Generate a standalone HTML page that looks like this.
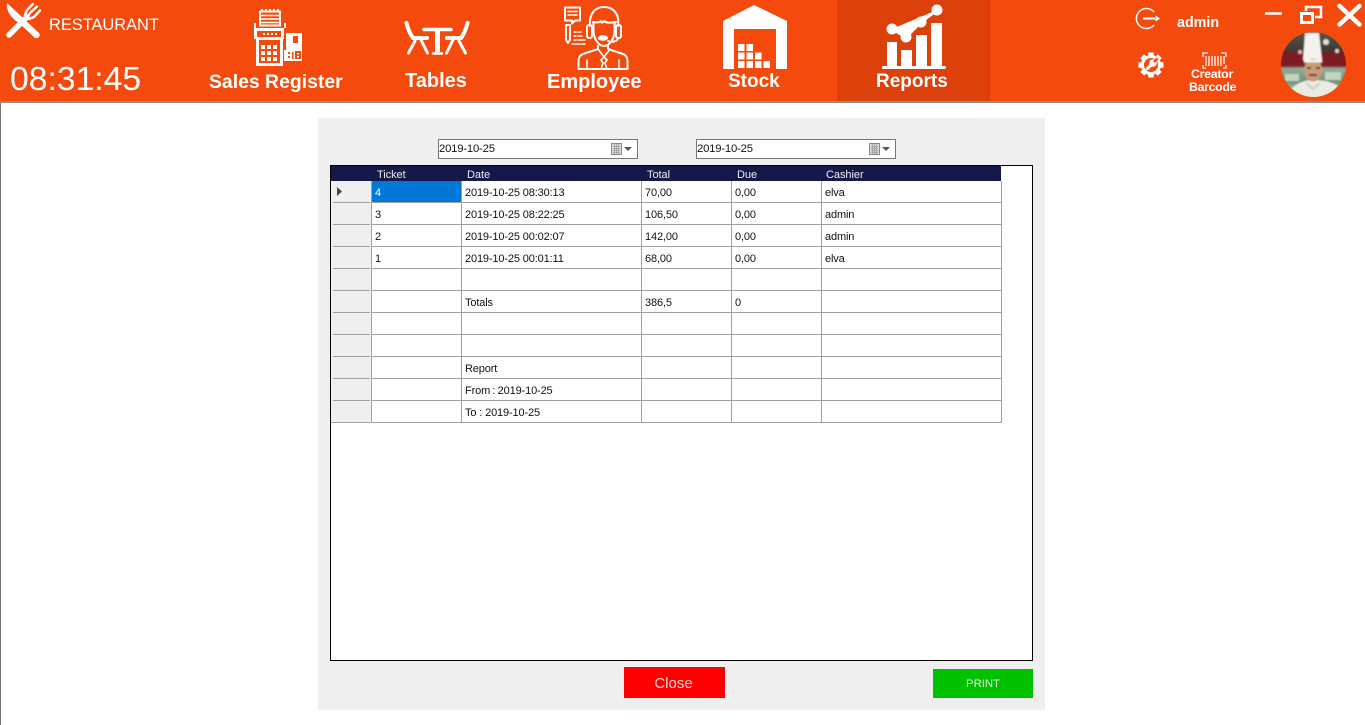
<!DOCTYPE html>
<html><head><meta charset="utf-8"><style>
html,body{margin:0;padding:0;background:#fff;width:1365px;height:725px;overflow:hidden;font-family:"Liberation Sans",sans-serif}
.a{position:absolute}
.t{position:absolute;white-space:nowrap}
.nav{position:absolute;color:#fff;font-weight:bold;font-size:20px;line-height:24px;white-space:nowrap}
.c{position:absolute;font-size:11px;line-height:14px;letter-spacing:-.14px;color:#111;white-space:nowrap;margin-top:1px}
.h{position:absolute;font-size:11px;line-height:14px;letter-spacing:-.05px;color:#eee;white-space:nowrap;top:168px}
.dp{position:absolute;top:139px;width:198px;height:18px;border:1px solid #777;background:#fff;font-size:11.300px;line-height:19px;letter-spacing:-.2px;color:#111;text-indent:0}
</style></head><body>
<div class="a" style="left:0;top:0;width:1365px;height:101px;background:#f54a0e"></div>
<div class="a" style="left:837px;top:0;width:153px;height:101px;background:#dc400b"></div>
<div class="a" style="left:0;top:101px;width:1365px;height:2px;background:#8d8d8d"></div>
<div class="a" style="left:0;top:103px;width:1px;height:622px;background:#777"></div>

<svg class="a" style="left:0;top:0" width="1365" height="101" viewBox="0 0 1365 101" fill="none">
<!-- cutlery -->
<path fill="#fff" d="M7 3L39 33a3.200 3.200 0 0 1-4.500 4.500L19 23C11 18 6 11 7 3Z"/>
<path d="M9 35L27 17" stroke="#fff" stroke-width="5.500" stroke-linecap="round"/>
<path d="M25 15L27 10L33 4M27 17L31 12L37 6.500M29 19L34 17L40 10.500" stroke="#fff" stroke-width="2.400" stroke-linecap="round" stroke-linejoin="round"/>
<!-- sales register -->
<g fill="#fff">
<path d="M260 11.500h20v14h-20z" fill="none" stroke="#fff" stroke-width="2"/>
<path d="M261 9h2v2h-2zM265 9h2v2h-2zM269 9h2v2h-2zM273 9h2v2h-2zM277 9h2v2h-2z"/>
<path d="M260 15.500h20M260 19h20M260 22.500h20" stroke="#fff" stroke-width="1.500"/>
<path d="M254 28h2v-5h-2zM284 28h2v-5h-2z"/>
<path fill-rule="evenodd" d="M254 28h30v11h-1v27h-27v-27h-2zM257 31v6h24v-6zM259 40v23h21v-23z"/>
<path d="M263 33h2v2h-2zM267 33h2v2h-2zM271 33h2v2h-2zM275 33h2v2h-2z"/>
<path d="M261 45h4v4h-4zM267 45h4v4h-4zM273 45h4v4h-4zM261 51h4v4h-4zM267 51h4v4h-4zM273 51h4v4h-4zM261 57h4v4h-4zM267 57h4v4h-4zM273 57h4v4h-4z"/>
<path fill-rule="evenodd" d="M286 33h16v28h-18v-11h2zM293 36v7h5v-7zM288 52v2h2v-2zM288 56v2h2v-2zM292 52v7h1.500v-7zM295 51v8h6v-8zM297 53v1.500h2v-1.500zM297 56v1.500h2v-1.500z"/>
</g>
<!-- tables -->
<g fill="none" stroke="#fff" stroke-linecap="round" stroke-linejoin="round">
<path d="M406.500 23C408 29 410 34 413 38H427" stroke-width="4"/><path d="M467.500 23C466 29 464 34 461 38H447" stroke-width="4"/>
<path d="M415 41L408.500 53M421 40L427.500 53M459 41L465.500 53M453 40L446.500 53" stroke-width="3"/>
<path d="M424 29.500H451" stroke-width="3.500"/><path d="M437.500 31V52" stroke-width="5" stroke-linecap="butt"/><path d="M433 53.500H442" stroke-width="2.500"/>
</g>
<!-- employee -->
<g fill="none" stroke="#fff" stroke-width="2" stroke-linejoin="round" stroke-linecap="round">
<path d="M565 7.500h15v13h-5l-3 3v-3h-7z"/><path d="M568 11.500h9M568 15h9" stroke-width="1.600"/>
<path d="M566 25v15l2 3 2-3v-15z"/><path d="M574 32h2M578 32h3M574 36h2M578 36h4M574 40h2M578 40h7M572 44h13" stroke-width="1.500"/>
<path d="M590 26c-1-11 4-19 14-19s16 8 14 19"/><path d="M593 22c5 1 7 0 8-1 0 2 2 2 3 0 2 2 5 2 12 1"/>
<path d="M593.500 22v8c0 9 5 16 10.500 16s10.500-7 10.500-16v-8"/>
<rect x="587" y="25" width="5" height="13" rx="2"/><rect x="616" y="25" width="5" height="13" rx="2"/>
<path d="M618 38c0 3-6 5-10 3"/><ellipse cx="603" cy="38" rx="4" ry="1.800" fill="#fff"/>
<path d="M598 46v3l-15 5c-3 1-4.500 4-4.500 7v8h49v-8c0-3-1.500-6-4.500-7l-15-5v-3"/>
<path d="M598 49l6 8 6-8M604 57l-3 3 2 3-2 6M604 57l3 3-2 3 2 6M587 60v9M619 60v9" stroke-width="1.600"/>
</g>
<!-- stock -->
<path fill="#fff" fill-rule="evenodd" d="M723 21L754 5L787 21V69H723ZM734 29V69H776V29Z"/>
<path fill="#fff" d="M738 44h6.500v7h-6.500zM746.500 44h6.500v7h-6.500zM738 52.500h6.500v7h-6.500zM746.500 52.500h6.500v7h-6.500zM755 52.500h6.500v7h-6.500zM738 61h6.500v7h-6.500zM746.500 61h6.500v7h-6.500zM755 61h6.500v7h-6.500zM763.500 61h6.500v7h-6.500z"/>
<!-- reports -->
<g fill="#fff">
<path d="M887 42h10v25h-10zM901 50h11v17h-11zM916 35h11v32h-11zM931 23h11v44h-11z"/>
<rect x="882" y="66" width="64" height="3" rx="1.500"/>
<path d="M892 29L906 37L921 22L937 10" stroke="#fff" stroke-width="3"/>
<circle cx="892" cy="29" r="5.500"/><circle cx="906" cy="37" r="5.500"/><circle cx="921" cy="22" r="5.500"/><circle cx="937" cy="10" r="5.500"/>
</g>
<!-- logout -->
<path d="M1154 12a10 10 0 1 0 0 13" stroke="#fff" stroke-width="1.500"/><path d="M1143 18.500h12" stroke="#fff" stroke-width="2"/><path d="M1155.500 15.500l4.500 3-4.500 3z" fill="#fff"/>
<!-- window buttons -->
<path d="M1265 13.500h17" stroke="#fff" stroke-width="2.500"/>
<path d="M1301.500 13.500h11v9h-11z" stroke="#fff" stroke-width="3"/><path d="M1306 11V7h15v10h-6" stroke="#fff" stroke-width="2.500"/>
<path d="M1339.500 6l20 18.500M1359.500 6l-20 18.500" stroke="#fff" stroke-width="4.500" stroke-linecap="round"/>
<!-- gear -->
<g>
<circle cx="1151" cy="65" r="10" fill="#fff"/>
<path d="M1151 52.500v25M1138.500 65h25M1142.200 56.200l17.600 17.600M1159.800 56.200l-17.600 17.600" stroke="#fff" stroke-width="5.500"/>
<circle cx="1151" cy="65" r="7" fill="#f54a0e"/>
<circle cx="1153" cy="63" r="3.800" fill="#fff"/>
<path d="M1147.500 68.500l5-5" stroke="#fff" stroke-width="3.200" stroke-linecap="round"/>
<path d="M1154 62l3.500-3.500" stroke="#f54a0e" stroke-width="2.600"/>
</g>
<!-- barcode -->
<g stroke="#fff">
<path d="M1203 57v-4h5M1221 53h5v4M1203 65v3h3M1226 65v3h-3" stroke-width="1.200"/>
<path d="M1206 56v10M1209 56v10M1212 56v10M1215 56v10M1218 56v10M1221 56v10M1224 56v8" stroke-width="1.300"/>
</g>
<!-- avatar -->
<defs><clipPath id="av"><circle cx="1313.500" cy="64.500" r="32.500"/></clipPath>
<linearGradient id="bg" x1="0" y1="0" x2="0" y2="1"><stop offset="0" stop-color="#55564c"/><stop offset=".28" stop-color="#3f3a36"/><stop offset=".33" stop-color="#7a1a22"/><stop offset=".52" stop-color="#7f1a22"/><stop offset=".56" stop-color="#8fae9f"/><stop offset=".75" stop-color="#6f9077"/><stop offset="1" stop-color="#dfe3d8"/></linearGradient>
<filter id="bl"><feGaussianBlur stdDeviation=".7"/></filter></defs>
<g clip-path="url(#av)"><g filter="url(#bl)">
<rect x="1280" y="31" width="67" height="67" fill="url(#bg)"/>
<circle cx="1326" cy="42" r="3" fill="#e0e0d0"/><circle cx="1337" cy="51" r="2" fill="#d8d8c8"/><circle cx="1300" cy="52" r="2" fill="#d8b8b0"/>
<path d="M1285 74h14v7h-14zM1325 72h16v8h-16z" fill="#c3d4bf"/>
<path d="M1292 88c6-5 12-8 21-8s17 1 25 6v14h-46z" fill="#ecebe3"/>
<path d="M1305 33h14l3 27h-19z" fill="#f4f2ec"/>
<ellipse cx="1313" cy="70" rx="9" ry="11.500" fill="#c99a7a"/>
<path d="M1304 59.500h18v3h-18z" fill="#f4f2ec"/>
<path d="M1307 68h4M1316 68h4M1309 75h8" stroke="#2e1c14" stroke-width="1.600"/>
<path d="M1306 83l7 6 7-6" stroke="#cfcabf" stroke-width="2"/>
</g></g>
</svg>

<div class="t" style="left:49px;top:16px;font-size:16.400px;line-height:18px;color:#fff">RESTAURANT</div>
<div class="t" style="left:10px;top:60px;font-size:33.700px;line-height:38px;color:#fff">08:31:45</div>
<div class="nav" style="left:209px;top:70px;font-size:19.400px">Sales Register</div>
<div class="nav" style="left:405px;top:69px">Tables</div>
<div class="nav" style="left:547px;top:70px">Employee</div>
<div class="nav" style="left:728px;top:70px;font-size:19px">Stock</div>
<div class="nav" style="left:876px;top:70px;font-size:19px">Reports</div>
<div class="t" style="left:1177px;top:15px;font-size:14.300px;line-height:16px;font-weight:bold;color:#fff">admin</div>
<div class="t" style="left:1191px;top:67px;font-size:12.400px;line-height:14px;font-weight:bold;color:#fff;letter-spacing:-.3px">Creator</div>
<div class="t" style="left:1189px;top:80px;font-size:12.300px;line-height:14px;font-weight:bold;color:#fff;letter-spacing:-.3px">Barcode</div>

<div class="a" style="left:318px;top:118px;width:727px;height:592px;background:#efefef"></div>
<div class="dp" style="left:438px">2019-10-25</div>
<div class="dp" style="left:696px">2019-10-25</div>
<svg class="a" style="left:0;top:0" width="1365" height="170" fill="none">
<rect x="611.500" y="143.500" width="10" height="11" fill="#ddd" stroke="#888"/><path d="M613 146.500h7M613 148.500h7M613 150.500h7M613 152.500h7M614.500 144v10M616.500 144v10M618.500 144v10" stroke="#999" stroke-width=".7"/><path d="M624 147h8l-4 4z" fill="#555"/>
<rect x="869.500" y="143.500" width="10" height="11" fill="#ddd" stroke="#888"/><path d="M871 146.500h7M871 148.500h7M871 150.500h7M871 152.500h7M872.500 144v10M874.500 144v10M876.500 144v10" stroke="#999" stroke-width=".7"/><path d="M882 147h8l-4 4z" fill="#555"/>
</svg>

<div class="a" style="left:330px;top:165px;width:701px;height:494px;border:1px solid #000;background:#fff"></div>
<div class="a" style="left:331px;top:166px;width:670px;height:15px;background:#14194a"></div>
<div class="a" style="left:331px;top:181px;width:40px;height:242px;background:#efefef"></div>
<div class="a" style="left:372px;top:181px;width:89px;height:21px;background:#0078d7"></div>
<svg class="a" style="left:0;top:0" width="1365" height="430" fill="none" stroke="#a0a0a0">
<path d="M333 202.500H370M333 224.500H370M333 246.500H370M333 268.500H370M333 290.500H370M333 312.500H370M333 334.500H370M333 356.500H370M333 378.500H370M333 400.500H370M331 422.500H370"/>
<path d="M372 202.500H1002M372 224.500H1002M372 246.500H1002M372 268.500H1002M372 290.500H1002M372 312.500H1002M372 334.500H1002M372 356.500H1002M372 378.500H1002M372 400.500H1002M372 422.500H1002"/>
<path d="M371.500 181V423M461.500 181V423M641.500 181V423M731.500 181V423M821.500 181V423M1001.500 181V423"/>
<path d="M337 187l5 4.500-5 4.500z" fill="#444" stroke="none"/>
</svg>

<div class="h" style="left:377px">Ticket</div><div class="h" style="left:467px">Date</div><div class="h" style="left:647px">Total</div><div class="h" style="left:737px">Due</div><div class="h" style="left:826px">Cashier</div>

<div class="c" style="left:375px;top:185px;color:#fff">4</div><div class="c" style="left:465px;top:185px">2019-10-25 08:30:13</div><div class="c" style="left:645px;top:185px">70,00</div><div class="c" style="left:735px;top:185px">0,00</div><div class="c" style="left:825px;top:185px">elva</div>
<div class="c" style="left:375px;top:207px">3</div><div class="c" style="left:465px;top:207px">2019-10-25 08:22:25</div><div class="c" style="left:645px;top:207px">106,50</div><div class="c" style="left:735px;top:207px">0,00</div><div class="c" style="left:825px;top:207px">admin</div>
<div class="c" style="left:375px;top:229px">2</div><div class="c" style="left:465px;top:229px">2019-10-25 00:02:07</div><div class="c" style="left:645px;top:229px">142,00</div><div class="c" style="left:735px;top:229px">0,00</div><div class="c" style="left:825px;top:229px">admin</div>
<div class="c" style="left:375px;top:251px">1</div><div class="c" style="left:465px;top:251px">2019-10-25 00:01:11</div><div class="c" style="left:645px;top:251px">68,00</div><div class="c" style="left:735px;top:251px">0,00</div><div class="c" style="left:825px;top:251px">elva</div>
<div class="c" style="left:465px;top:295px">Totals</div><div class="c" style="left:645px;top:295px">386,5</div><div class="c" style="left:735px;top:295px">0</div>
<div class="c" style="left:465px;top:361px">Report</div>
<div class="c" style="left:465px;top:383px;word-spacing:-.6px">From : 2019-10-25</div>
<div class="c" style="left:465px;top:405px">To : 2019-10-25</div>

<div class="a" style="left:624px;top:667px;width:101px;height:31px;background:#ff0000;color:#f4d8d8;font-size:15px;line-height:33px;text-align:center;box-sizing:border-box;padding-right:2px">Close</div>
<div class="a" style="left:933px;top:669px;width:100px;height:29px;background:#00c000;color:#e6f5e0;font-size:11.300px;line-height:30px;text-align:center">PRINT</div>
</body></html>
